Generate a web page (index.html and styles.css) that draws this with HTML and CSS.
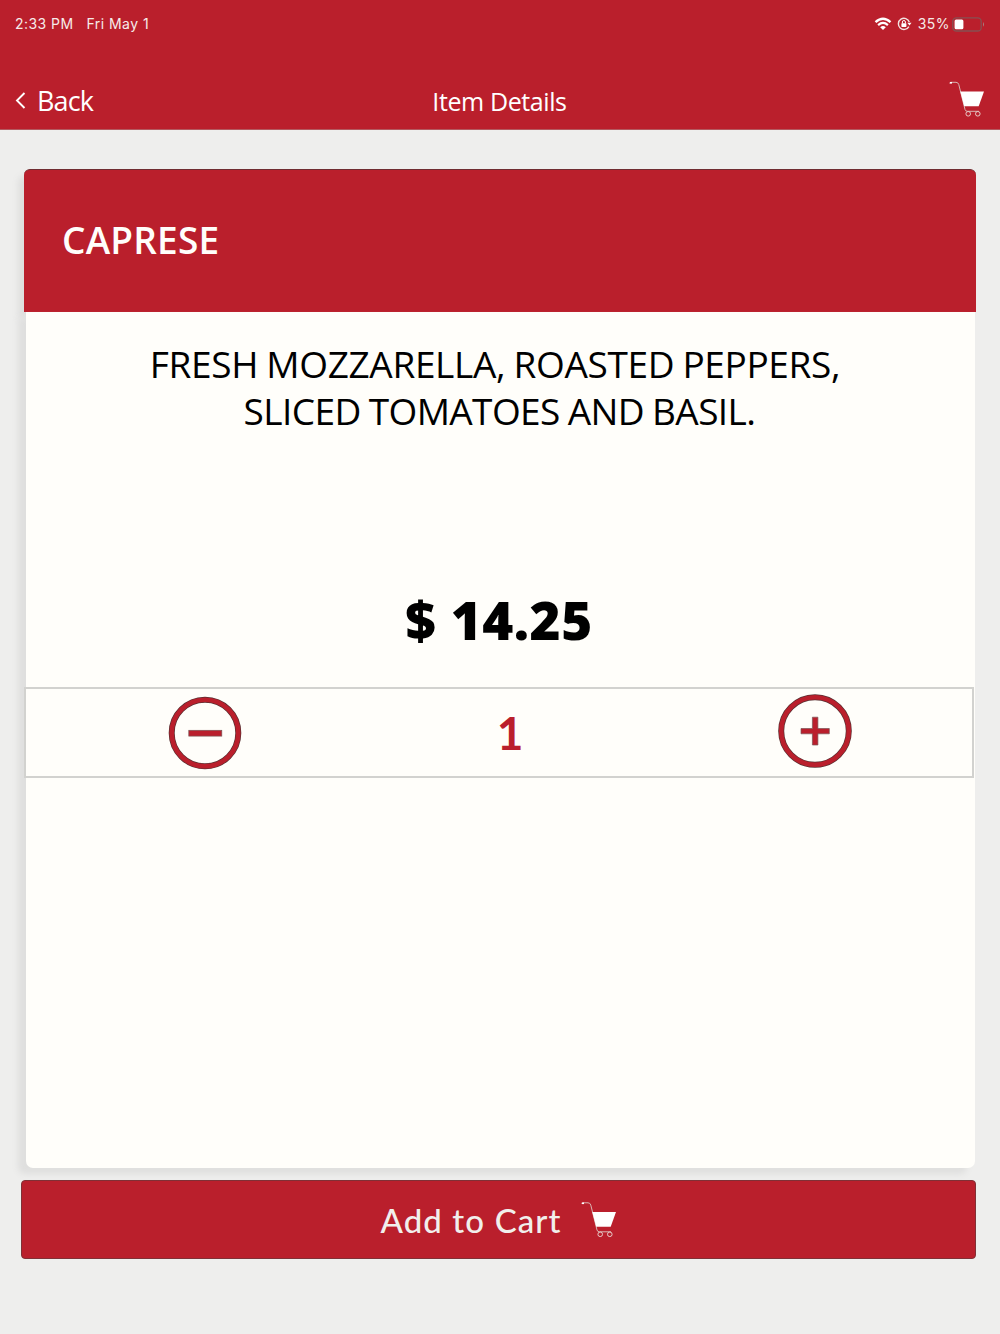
FILE: index.html
```
<!DOCTYPE html>
<html lang="en">
<head>
<meta charset="utf-8">
<meta name="viewport" content="width=device-width, initial-scale=1">
<title>Item Details</title>
<link rel="stylesheet" href="styles.css">
</head>
<body>

<!-- cart icon, used in the header and the button -->
<svg class="defs" width="0" height="0">
  <symbol id="cart" viewBox="0 0 36 36">
    <path d="M1 2.4 L1.6 1.3 H7 Q9.2 1.3 9.8 3.6 L16 28.5 Q16.5 30.3 18.3 30.3 H30" fill="none" stroke="#d9b5b3" stroke-width="1"/>
    <path d="M.8 1.8 H3" stroke="#fff" stroke-width="1.6"/>
    <path d="M11.3 10.5 H35 L29.7 25.2 H15.2 Z" fill="#fff"/>
    <circle cx="19.2" cy="32.8" r="2.3" fill="none" stroke="#e8c8c6" stroke-width="1"/>
    <circle cx="28.8" cy="32.8" r="2.3" fill="none" stroke="#e8c8c6" stroke-width="1"/>
  </symbol>
</svg>

<div class="header">
  <div class="status">
    <span class="time">2:33 PM</span>
    <span class="date">Fri May 1</span>
    <svg class="wifi" width="18" height="14" viewBox="0 0 18 14">
      <path d="M1.5 5.2 Q9 -1.6 16.5 5.2" fill="none" stroke="#fff" stroke-width="2.3"/>
      <path d="M4.1 8.1 Q9 3.8 13.9 8.1" fill="none" stroke="#fff" stroke-width="2.2"/>
      <path d="M9 13 L6.2 10.2 Q9 8 11.8 10.2 Z" fill="#fff"/>
    </svg>
    <svg class="lock" width="15" height="14" viewBox="0 0 15 14">
      <path d="M11.9 9.6 A5.6 5.6 0 1 1 12.3 5" fill="none" stroke="#f3e3e2" stroke-width="1.4"/>
      <path d="M10.3 5.8 H14.5 L12.5 8.6 Z" fill="#fff"/>
      <rect x="4.4" y="6.2" width="5" height="3.7" rx=".6" fill="#fff"/>
      <path d="M5.4 6.4 V5 a1.5 1.5 0 0 1 3 0 V6.4" fill="none" stroke="#fff" stroke-width="1"/>
    </svg>
    <span class="percent">35%</span>
    <svg class="battery" width="33" height="15" viewBox="0 0 33 15">
      <rect x=".8" y=".8" width="28.4" height="13.2" rx="3.6" fill="none" stroke="#875052" stroke-width="1.3"/>
      <rect x="2.6" y="2.5" width="8.8" height="9.8" rx="1.5" fill="#fff"/>
      <path d="M31 5 Q33 7.4 31 9.8 Z" fill="#a98081"/>
    </svg>
  </div>
  <div class="nav">
    <a class="back">
      <svg width="11" height="17" viewBox="0 0 11 17"><path d="M9.5 1 L2 8.5 L9.5 16" fill="none" stroke="#fff" stroke-width="1.9"/></svg>
      <span>Back</span>
    </a>
    <div class="title">Item Details</div>
    <svg class="cartIcon" width="36" height="36"><use href="#cart"/></svg>
  </div>
</div>

<div class="card">
  <h2>CAPRESE</h2>
  <div class="content">
    <p class="description"><span class="line1">FRESH MOZZARELLA, ROASTED PEPPERS,</span><br><span class="line2">SLICED TOMATOES AND BASIL.</span></p>
    <div class="price">$ 14.25</div>
    <div class="quantity">
      <svg class="minus" width="74" height="74" viewBox="0 0 74 74">
        <circle cx="37" cy="37" r="33.3" fill="none" stroke="#5b3032" stroke-width="6"/>
        <circle cx="37" cy="37" r="33.3" fill="none" stroke="#ba1f2c" stroke-width="4.6"/>
        <rect x="20.8" y="34.3" width="33" height="5.8" fill="#ba1f2c" stroke="#7a5556" stroke-width=".7"/>
      </svg>
      <span class="count">1</span>
      <svg class="plus" width="74" height="74" viewBox="0 0 74 74">
        <circle cx="37" cy="37" r="33.8" fill="none" stroke="#5b3032" stroke-width="6"/>
        <circle cx="37" cy="37" r="33.8" fill="none" stroke="#ba1f2c" stroke-width="4.6"/>
        <path d="M34.4 23.2 H39.9 V34.5 H51.3 V39.8 H39.9 V51 H34.4 V39.8 H23 V34.5 H34.4 Z" fill="#ba1f2c" stroke="#7a5556" stroke-width=".7"/>
      </svg>
    </div>
  </div>
</div>

<div class="addBtn">
  <span>Add to Cart</span>
  <svg width="36" height="37"><use href="#cart"/></svg>
</div>

</body>
</html>
```
FILE: styles.css
```
* {
  box-sizing: border-box;
}

body {
  margin: 0;
  min-height: 1334px;
  background: #eeeeed;
  font-family: "Open Sans", "Noto Sans", sans-serif;
}

.defs {
  display: block;
}

.header {
  height: 130px;
  background: #ba1f2c;
  border-bottom: 1px solid #b45a60;
  color: #fff;
}

.status {
  display: flex;
  align-items: center;
  height: 48px;
  padding: 0 15px;
  font-family: Inter, sans-serif;
  font-size: 14px;
  line-height: 18px;
  letter-spacing: 0.45px;
  color: #f6ebe9;
}

.time,
.date,
.percent {
  padding-bottom: 1px;
}

.date {
  margin-left: 13px;
}

.wifi {
  margin-left: auto;
}

.lock {
  margin-left: 5px;
}

.percent {
  margin-left: 6px;
}

.battery {
  margin-left: 2px;
}

.nav {
  display: grid;
  grid-template-columns: 1fr auto 1fr;
  align-items: center;
  height: 81px;
  padding: 24px 15px 0 15px;
}

.back {
  display: flex;
  align-items: center;
  gap: 11px;
  font-size: 27px;
  letter-spacing: -0.9px;
}

.title {
  margin-right: 1px;
  font-size: 25px;
  letter-spacing: -0.4px;
}

.cartIcon {
  justify-self: end;
  margin-bottom: 4px;
}

.card {
  margin: 39px 24px 0 24px;
}

.card h2 {
  display: flex;
  align-items: center;
  height: 143px;
  margin: 0;
  padding: 0 0 4px 38px;
  background: #ba1f2c;
  border-top: 1px solid #6f2c31;
  border-radius: 6px 6px 0 0;
  box-shadow: -6px 7px 6px #dfdfde;
  color: #fffefb;
  font-size: 37px;
  font-weight: 600;
  letter-spacing: 0.2px;
}

.content {
  position: relative;
  height: 856px;
  margin: 0 1px 0 2px;
  padding-top: 28px;
  background: #fffefa;
  border-radius: 0 0 7px 7px;
  box-shadow: -8px 6px 6px #dfdfde;
  text-align: center;
}

.description {
  margin: 0;
  font-size: 37px;
  line-height: 47px;
  word-spacing: -1px;
}

.line1 {
  padding-right: 11px;
  letter-spacing: -0.35px;
}

.line2 {
  padding-right: 2px;
  letter-spacing: -0.6px;
}

.price {
  height: 70px;
  margin-top: 151px;
  padding-right: 3px;
  font-size: 53px;
  font-weight: 800;
  line-height: 70px;
  letter-spacing: 0.5px;
}

.quantity {
  display: flex;
  align-items: center;
  height: 91px;
  margin: 32px 1px 0 -2px;
  border: 2px solid #d2d2cf;
  color: #ba1f2c;
}

.minus {
  margin-left: 142px;
}

.count {
  flex: 1;
  font-family: Lato, sans-serif;
  font-size: 46px;
  font-weight: bold;
}

.plus {
  margin-right: 120px;
  margin-bottom: 3px;
}

.addBtn {
  position: relative;
  display: flex;
  align-items: center;
  justify-content: center;
  gap: 19px;
  height: 79px;
  margin: 12px 24px 0 21px;
  background: #ba1f2c;
  border: 1px solid #803036;
  border-radius: 4px;
  color: #f1efec;
  font-family: Lato, sans-serif;
  font-size: 33px;
  font-weight: 500;
  letter-spacing: 1.1px;
}
```
